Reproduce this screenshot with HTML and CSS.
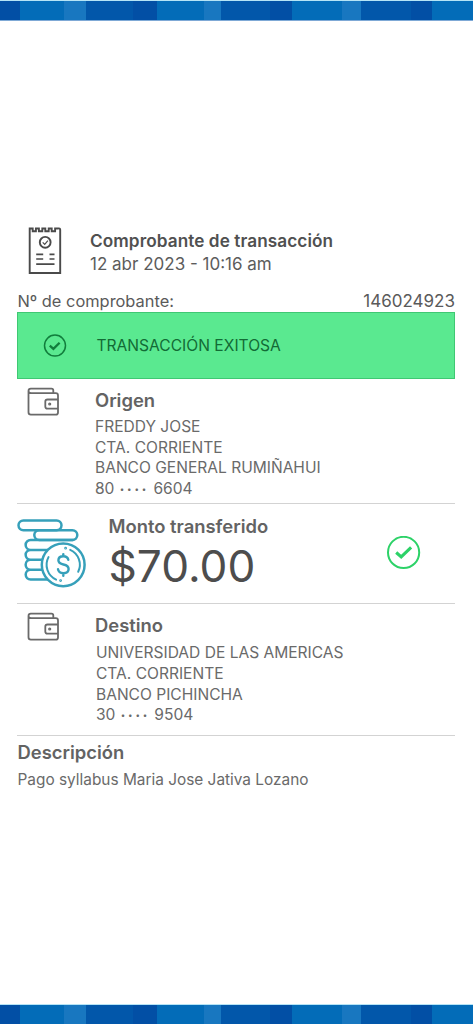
FILE: index.html
```html
<!DOCTYPE html>
<html lang="es">
<head>
<meta charset="utf-8">
<title>Comprobante de transacción</title>
<link rel="stylesheet" href="styles.css">
</head>
<body>
<div class="page">
  <div class="band"></div>
  <main class="receipt">
    <header class="head">
      <svg class="doc-icon" width="34" height="48" viewBox="0 0 34 48" fill="none" stroke="#4a4a4a" stroke-width="1.9">
        <path d="M1.7 1.5h3v2.8h3.2V1.5h3v2.8h3.4V1.5h3v2.8h3.4V1.5h3v2.8h3.4V1.5h2.8q2.3-.5 2.3 1.2V46H1.7z"/>
        <circle cx="17.2" cy="15.3" r="5.4"/>
        <path d="M14.7 15.3l2 2 3.2-3.6" stroke-width="1.2"/>
        <path d="M8.2 27.3h7M21.5 27.3h5M8.2 32h7M21.5 32h5M8.2 37.2h18.3" stroke-width="1.7"/>
      </svg>
      <div class="head-text">
        <h1 class="title">Comprobante de transacción</h1>
        <p class="date">12 abr 2023 - 10:16 am</p>
      </div>
    </header>
    <div class="number"><span class="number-label">Nº de comprobante:</span><span class="number-value">146024923</span></div>
    <div class="status">
      <svg width="24" height="24" viewBox="0 0 24 24" fill="none" stroke="#117d3c">
        <circle cx="12" cy="11.6" r="10.5" stroke-width="1.5"/>
        <path d="M6.8 11.6l3.6 3.3 6.2-6.2" stroke-width="2.3"/>
      </svg>
      <span class="status-text">TRANSACCIÓN EXITOSA</span>
    </div>
    <section class="account origin">
      <svg class="wallet" width="33" height="30" viewBox="0 0 33 30" fill="none" stroke="#6a6a6a" stroke-width="1.8" stroke-linejoin="round">
        <path d="M26.3 6V3.4q0-1.8-1.8-1.8H3.8Q1.5 1.6 1.5 4v21.3q0 2.3 2.3 2.3h25q2.2 0 2.2-2.2V8.4q0-2.2-2.2-2.2H4.5Q1.5 6.2 1.5 4"/>
        <path d="M31 12.5H20.5q-2.2 0-2.2 2.2v4.8q0 2.2 2.2 2.2H31"/>
        <circle cx="22.7" cy="17" r=".7"/>
      </svg>
      <div>
        <h2 class="heading">Origen</h2>
        <p class="line">FREDDY JOSE</p>
        <p class="line">CTA. CORRIENTE</p>
        <p class="line">BANCO GENERAL RUMIÑAHUI</p>
        <p class="line">80 <span class="dots">••••</span> 6604</p>
      </div>
    </section>
    <section class="amount">
      <svg class="coins" width="70" height="71" viewBox="0 -.6 70 71" fill="none" stroke="#36a0ba" stroke-width="2.5" stroke-linecap="round">
        <rect x="1.5" y="1.8" width="43" height="9.8" rx="4.9"/>
        <rect x="17.3" y="11.6" width="43" height="9.8" rx="4.9"/>
        <path d="M20 21.4h-6.4a4.9 4.9 0 0 0 0 9.9H31M13.6 31.3a4.9 4.9 0 0 0 0 9.9H26M13.6 41.2a4.9 4.9 0 0 0 0 9.9H27M13.6 51.1a4.9 4.9 0 0 0 0 9.8H32M20 21.4h36"/>
        <circle cx="46.2" cy="46.2" r="21.4" fill="#fff"/>
        <path d="M53.2 31.2a16.3 16.3 0 0 1 8 22M31.5 38.5a16.3 16.3 0 0 0 7.6 22.5" stroke-width="2"/>
        <path d="M51.3 41.2c-.5-2.5-2.3-3.6-4.9-3.6-3 0-5 1.5-5 4.1 0 2.5 1.8 3.5 5 4.2 3.5.7 5.2 1.8 5.2 4.5s-2.2 4.2-5.2 4.2c-3 0-5-1.2-5.4-4M46.3 35.5v2M46.3 55v2.1" stroke-width="2.4"/>
        <circle cx="48.6" cy="29.6" r=".5" stroke-width="1.8"/>
        <circle cx="43.6" cy="62" r=".5" stroke-width="1.8"/>
      </svg>
      <div class="amount-text">
        <h2 class="heading">Monto transferido</h2>
        <p class="value">$70.00</p>
      </div>
      <svg class="ok" width="34" height="34" viewBox="0 0 34 34" fill="none" stroke="#2dd268">
        <circle cx="16.6" cy="16.4" r="15.6" stroke-width="2"/>
        <path d="M9.2 16.5l5 4.4 9.9-9.6" stroke-width="3.1"/>
      </svg>
    </section>
    <section class="account target">
      <svg class="wallet" width="33" height="30" viewBox="0 0 33 30" fill="none" stroke="#6a6a6a" stroke-width="1.8" stroke-linejoin="round">
        <path d="M26.3 6V3.4q0-1.8-1.8-1.8H3.8Q1.5 1.6 1.5 4v21.3q0 2.3 2.3 2.3h25q2.2 0 2.2-2.2V8.4q0-2.2-2.2-2.2H4.5Q1.5 6.2 1.5 4"/>
        <path d="M31 12.5H20.5q-2.2 0-2.2 2.2v4.8q0 2.2 2.2 2.2H31"/>
        <circle cx="22.7" cy="17" r=".7"/>
      </svg>
      <div>
        <h2 class="heading">Destino</h2>
        <div class="target-lines">
          <p class="line">UNIVERSIDAD DE LAS AMERICAS</p>
          <p class="line">CTA. CORRIENTE</p>
          <p class="line">BANCO PICHINCHA</p>
          <p class="line">30 <span class="dots">••••</span> 9504</p>
        </div>
      </div>
    </section>
    <section class="description">
      <h2 class="heading">Descripción</h2>
      <p class="note">Pago syllabus Maria Jose Jativa Lozano</p>
    </section>
  </main>
  <div class="band"></div>
</div>
</body>
</html>
```
FILE: styles.css
```css
* { box-sizing: border-box; }
body { margin: 0; background: #fff; font-family: Inter, "Liberation Sans", sans-serif; color: #6a6a6a; }
h1, h2, p { margin: 0; white-space: nowrap; }
svg { display: block; flex: none; }
.page { height: 1024px; display: flex; flex-direction: column; overflow: hidden; }
.band {
  height: 20px; flex: none; border-top: 1px solid #b5e4f6;
  background: linear-gradient(90deg, #024fa5 0 20px, #036cb8 20px 64px, #1877c0 64px 86px, #0257aa 86px 133px, #024fa5 133px 157px, #036cb8 157px 204px, #1877c0 204px 221px, #0257aa 221px 270px, #024fa5 270px 292px, #036cb8 292px 342px, #1877c0 342px 361px, #0257aa 361px 411px, #024fa5 411px 432px, #036cb8 432px);
}
.band:first-child { height: 21px; border-bottom: 1px solid #7fa9d6; }
.receipt { flex: 1; padding: 205px 18px 0 17px; }
.head { display: flex; height: 65px; padding-left: 11px; }
.doc-icon { margin-top: 1px; }
.head-text { padding: 4px 0 0 28px; }
.title { font-size: 17.2px; line-height: 21px; margin-bottom: 2px; font-weight: 600; letter-spacing: .08px; color: #505050; }
.date { font-size: 17px; line-height: 23px; color: #5c5c5c; }
.number { display: flex; justify-content: space-between; height: 21px; font-size: 16.4px; line-height: 21px; color: #5a5a5a; }
.number-label { padding-left: .5px; }
.number-value { font-size: 17px; }
.status { display: flex; align-items: center; height: 67px; padding-left: 25px; background: #5ae990; border: 1px solid #3fc873; color: #126b35; }
.status-text { font-size: 15.6px; margin-left: 29.5px; }
.account { display: flex; border-bottom: 1px solid #d3d3d3; }
.account .wallet { margin: 8px 35px 0 10px; }
.origin { height: 125px; }
.target { height: 132px; }
.heading { font-size: 18.4px; line-height: 22px; margin-bottom: 2px; font-weight: 600; color: #636363; }
.origin .heading { margin-top: 10px; margin-bottom: 6px; }
.target .heading { margin-top: 10px; margin-bottom: 7.4px; }
.line { font-size: 15.55px; line-height: 20.6px; }
.target-lines { padding-left: 1px; }
.dots { font-size: 8px; letter-spacing: 2.8px; margin-left: 1px; position: relative; top: -2px; }
.amount { display: flex; height: 100px; border-bottom: 1px solid #d3d3d3; }
.coins { margin-top: 14px; }
.amount-text { flex: 1; padding: 11px 0 0 21.5px; }
.value { font-size: 44.2px; line-height: 54px; color: #4d4d4d; }
.ok { margin: 32px 34px 0 0; }
.description { padding: 5px 0 0 .5px; }
.note { font-size: 15.4px; line-height: 20px; margin-top: 7px; }
```
